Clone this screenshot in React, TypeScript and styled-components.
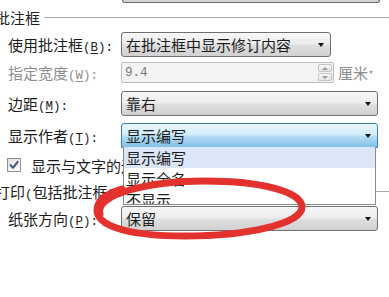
import styled, { createGlobalStyle, css } from "styled-components";

const GlobalStyle = createGlobalStyle`
  html, body {
    margin: 0;
    padding: 0;
    background: #ffffff;
  }
  body {
    font-family: "Noto Sans CJK SC", "Noto Sans", sans-serif;
    font-size: 15px;
    color: #1c1c1c;
  }
`;

const authorOptions = ["显示编写", "显示全名", "不显示"];

const App = () => {
  return (
    <>
      <GlobalStyle />
      <Page>
        <TopStub />
        <SectionTitle $height={29}>
          <span>批注框</span>
          <Rule />
        </SectionTitle>

        <Row>
          <Label>
            使用批注框<Half>(<u>B</u>):</Half>
          </Label>
          <Select $width={210}>
            在批注框中显示修订内容
            <Arrow />
          </Select>
        </Row>

        <Row $top={5} $height={21}>
          <Label $disabled>
            指定宽度<Half>(<u>W</u>):</Half>
          </Label>
          <SpinInput>
            <Half>9.4</Half>
            <Spinner>
              <SpinButton>
                <SpinGlyph $up />
              </SpinButton>
              <SpinButton>
                <SpinGlyph />
              </SpinButton>
            </Spinner>
          </SpinInput>
          <Unit>
            厘米
            <UnitArrow />
          </Unit>
        </Row>

        <Row $top={8}>
          <Label>
            边距<Half>(<u>M</u>):</Half>
          </Label>
          <Select $width={257}>
            靠右
            <Arrow />
          </Select>
        </Row>

        <Row $top={7} $raised>
          <Label>
            显示作者<Half>(<u>T</u>):</Half>
          </Label>
          <Select $width={257} $active>
            显示编写
            <Arrow />
            <DropList>
              {authorOptions.map((option, i) => (
                <DropItem key={option} $selected={i === 0}>
                  {option}
                </DropItem>
              ))}
            </DropList>
          </Select>
        </Row>

        <CheckRow>
          <CheckBox>
            <svg viewBox="0 0 10 10" width="10" height="10" aria-hidden="true">
              <path d="M1.5 5.2 L4 7.8 L8.6 1.8" />
            </svg>
          </CheckBox>
          <span>
            显示与文字的连线<Half>(<u>L</u>)</Half>
          </span>
        </CheckRow>

        <SectionTitle $height={18}>
          <span>
            打印<Half>(</Half>包括批注框<Half>)</Half>
          </span>
          <Rule />
        </SectionTitle>

        <Row $top={6}>
          <Label>
            纸张方向<Half>(<u>P</u>):</Half>
          </Label>
          <Select $width={257}>
            保留
            <Arrow />
          </Select>
        </Row>

        <Annotation viewBox="0 0 389 297" aria-hidden="true">
          <defs>
            <filter id="soft" x="-10%" y="-30%" width="120%" height="160%">
              <feGaussianBlur stdDeviation="0.7" />
            </filter>
          </defs>
          <path
            d="M100 214 C94 194, 150 181, 205 181 C262 181, 302 192, 302 207 C302 224, 246 236, 185 236 C128 236, 97 226, 97 210 C97 200, 108 193, 122 189"
            filter="url(#soft)"
          />
        </Annotation>
      </Page>
    </>
  );
};

const Page = styled.div`
  position: relative;
  width: 389px;
  height: 297px;
  overflow: hidden;
  box-sizing: border-box;
  padding-left: 8px;
  display: flex;
  flex-direction: column;
  background: #ffffff;
`;

const TopStub = styled.div`
  flex: 0 0 auto;
  margin-left: 114px;
  width: 256px;
  height: 2px;
  border: 1px solid #6a6a6a;
  border-top: none;
  border-radius: 0 0 3px 3px;
  background: #d2d2d2;
`;

const SectionTitle = styled.div<{ $height: number }>`
  flex: 0 0 auto;
  height: ${({ $height }) => $height}px;
  margin-left: -13px;
  display: flex;
  align-items: center;
  gap: 4px;
  white-space: nowrap;
  color: #1c1c1c;
`;

const Rule = styled.div`
  flex: 1;
  height: 1px;
  background: #a9a9a9;
`;

const Row = styled.div<{ $top?: number; $height?: number; $raised?: boolean }>`
  flex: 0 0 auto;
  margin-top: ${({ $top }) => $top ?? 0}px;
  height: ${({ $height }) => $height ?? 25}px;
  display: flex;
  align-items: center;
  position: relative;
  z-index: ${({ $raised }) => ($raised ? 3 : 1)};
`;

const Label = styled.div<{ $disabled?: boolean }>`
  flex: 0 0 113px;
  white-space: nowrap;
  color: ${({ $disabled }) => ($disabled ? "#8e8e8e" : "#1c1c1c")};

  u {
    text-underline-offset: 2px;
  }
`;

const Half = styled.span`
  font-family: "Liberation Mono", "DejaVu Sans Mono", monospace;
  font-size: 12.5px;
`;

const Select = styled.div<{ $width: number; $active?: boolean }>`
  position: relative;
  box-sizing: border-box;
  width: ${({ $width }) => $width}px;
  height: 25px;
  padding: 0 6px 0 4px;
  display: flex;
  align-items: center;
  justify-content: space-between;
  white-space: nowrap;
  border-radius: 3px;
  border: 1px solid #707070;
  background: linear-gradient(
    to bottom,
    #f7f7f7 0%,
    #ededed 45%,
    #dedede 55%,
    #d1d1d1 100%
  );
  color: #1c1c1c;

  ${({ $active }) =>
    $active &&
    css`
      border-color: #3c7fb1;
      border-radius: 3px 3px 0 0;
      background: linear-gradient(
        to bottom,
        #eaf6fd 0%,
        #d4edfb 45%,
        #b3dcf4 55%,
        #80bfe6 100%
      );
    `}
`;

const Arrow = styled.span`
  width: 0;
  height: 0;
  border-left: 3.5px solid transparent;
  border-right: 3.5px solid transparent;
  border-top: 4px solid #111111;
`;

const DropList = styled.div`
  position: absolute;
  top: 100%;
  left: 1px;
  right: 1px;
  height: 58px;
  box-sizing: border-box;
  background: #ffffff;
  border: 1px solid #8a8a8a;
  border-top: none;
  display: flex;
  flex-direction: column;
  overflow: hidden;
`;

const DropItem = styled.div<{ $selected?: boolean }>`
  flex: 0 0 20px;
  display: flex;
  align-items: center;
  padding-left: 2px;
  background: ${({ $selected }) => ($selected ? "#dbe6f8" : "transparent")};
  color: #1c1c1c;
`;

const SpinInput = styled.div`
  box-sizing: border-box;
  width: 213px;
  height: 21px;
  padding: 0 1px 0 3px;
  display: flex;
  align-items: center;
  justify-content: space-between;
  border: 1px solid #bcbcbc;
  border-radius: 2px;
  background: #f3f3f3;
  color: #777777;
`;

const Spinner = styled.div`
  width: 14px;
  height: 17px;
  display: flex;
  flex-direction: column;
  gap: 1px;
`;

const SpinButton = styled.div`
  flex: 1;
  display: flex;
  align-items: center;
  justify-content: center;
  box-sizing: border-box;
  border: 1px solid #c4c4c4;
  border-radius: 2px;
  background: linear-gradient(to bottom, #f8f8f8, #e4e4e4);
`;

const SpinGlyph = styled.span<{ $up?: boolean }>`
  width: 0;
  height: 0;
  border-left: 3px solid transparent;
  border-right: 3px solid transparent;
  ${({ $up }) =>
    $up ? "border-bottom: 3px solid #9a9a9a;" : "border-top: 3px solid #9a9a9a;"}
`;

const Unit = styled.div`
  margin-left: 4px;
  display: flex;
  align-items: center;
  gap: 1px;
  color: #8c8c8c;
`;

const UnitArrow = styled.span`
  width: 0;
  height: 0;
  border-left: 2.5px solid transparent;
  border-right: 2.5px solid transparent;
  border-top: 3px solid #9a9a9a;
`;

const CheckRow = styled.div`
  flex: 0 0 34px;
  display: flex;
  align-items: center;
  gap: 10px;
  white-space: nowrap;
  position: relative;
  z-index: 1;
`;

const CheckBox = styled.div`
  margin-left: -1px;
  width: 14px;
  height: 14px;
  box-sizing: border-box;
  border: 1px solid #8f8f8f;
  background: linear-gradient(135deg, #dcdcdc 0%, #f2f2f2 60%, #ffffff 100%);
  display: flex;
  align-items: center;
  justify-content: center;

  svg {
    fill: none;
    stroke: #3e4f7a;
    stroke-width: 1.9;
    stroke-linecap: round;
    stroke-linejoin: round;
  }
`;

const Annotation = styled.svg`
  position: absolute;
  left: 0;
  top: 0;
  width: 389px;
  height: 297px;
  pointer-events: none;
  z-index: 10;

  path {
    fill: none;
    stroke: #e3302f;
    stroke-width: 7;
    stroke-linecap: round;
  }
`;

export default App;
